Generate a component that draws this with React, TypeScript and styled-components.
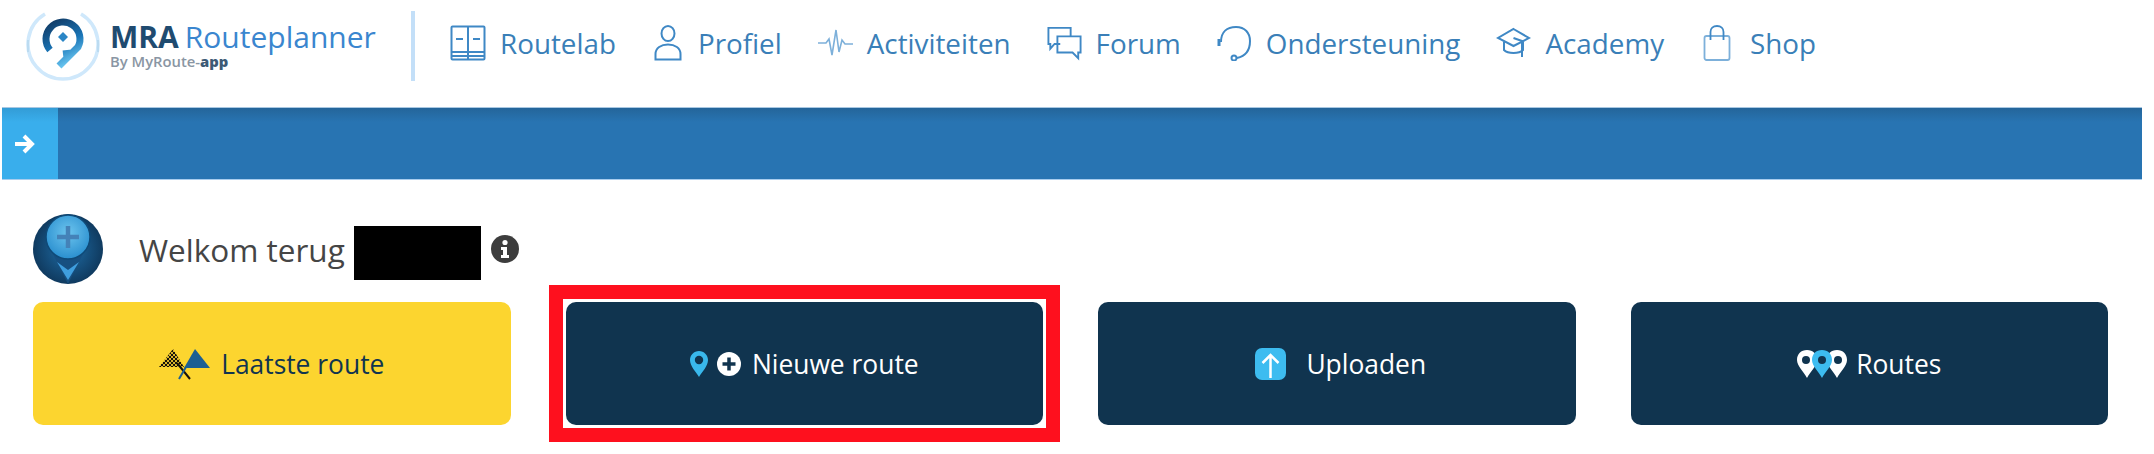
import styled, { createGlobalStyle } from "styled-components";

const GlobalStyle = createGlobalStyle`
  html, body {
    margin: 0;
    padding: 0;
    background: #fff;
    font-family: "Open Sans", "Noto Sans", sans-serif;
  }
`;

const Page = styled.div`
  width: 2154px;
  height: 454px;
  overflow: hidden;
  background: #fff;
`;

const Header = styled.header`
  height: 107px;
  display: flex;
  align-items: flex-start;
  padding-left: 26px;
  box-sizing: border-box;
`;

const Brand = styled.div`
  display: flex;
  align-items: flex-start;
  gap: 8px;
  width: 385px;
  padding-top: 10px;
`;

const BrandText = styled.div`
  display: flex;
  flex-direction: column;
  padding-top: 12px;
`;

const BrandTitle = styled.div`
  font-size: 30px;
  line-height: 30px;
  color: #3a86cf;
  white-space: nowrap;

  b {
    font-weight: 700;
    color: #1f4b70;
    margin-right: 6px;
  }
`;

const BrandSub = styled.div`
  font-size: 14.8px;
  line-height: 16px;
  margin-top: 1px;
  font-weight: 600;
  color: #8a96a3;
  white-space: nowrap;

  b {
    font-weight: 800;
    color: #3d5a75;
  }
`;

const Divider = styled.div`
  width: 4px;
  height: 70px;
  margin-top: 11px;
  background: #c3dff8;
`;

const Nav = styled.nav`
  display: flex;
  align-items: center;
  gap: 36px;
  height: 86px;
  margin-left: 35px;
`;

const NavItem = styled.a`
  display: flex;
  align-items: center;
  gap: 14px;
  font-size: 27.8px;
  color: #3a7fb8;
  white-space: nowrap;
`;

const Bar = styled.div`
  height: 73px;
  margin: 0 12px 0 2px;
  background: linear-gradient(#24659a, #2874b2 14px);
  border-top: 1px solid #a9c8e2;
  border-bottom: 1px solid #a9cdee;
  box-sizing: border-box;
`;

const Toggle = styled.button`
  width: 56px;
  height: 100%;
  border: none;
  padding: 0 12px 0 0;
  background: linear-gradient(#339cd6, #39aeec 14px);
  display: flex;
  align-items: center;
  justify-content: center;
`;

const Welcome = styled.div`
  display: flex;
  align-items: center;
  height: 70px;
  margin-top: 34px;
  padding-left: 33px;
`;

const WelcomeText = styled.span`
  font-size: 31.5px;
  color: #454545;
  margin-left: 36px;
  white-space: nowrap;
`;

const Redacted = styled.div`
  width: 127px;
  height: 54px;
  margin: 8px 10px 0 9px;
  background: #000;
`;

const Buttons = styled.div`
  display: grid;
  grid-template-columns: repeat(4, 1fr);
  gap: 55px;
  width: 2075px;
  margin: 18px 0 0 33px;
`;

const ActionButton = styled.button<{ $variant?: "yellow" | "navy"; $gap?: number; $shift?: number }>`
  flex: 1;
  height: 123px;
  border: none;
  border-radius: 10px;
  padding: 0 0 0 ${({ $shift }) => $shift ?? 0}px;
  display: flex;
  align-items: center;
  justify-content: center;
  gap: ${({ $gap }) => $gap ?? 11}px;
  font-family: inherit;
  font-size: 26.4px;
  background: ${({ $variant }) => ($variant === "yellow" ? "#fcd52f" : "#10344f")};
  color: ${({ $variant }) => ($variant === "yellow" ? "#10344f" : "#fff")};
`;

const MarkedFrame = styled.div`
  display: flex;
  margin: -17px;
  padding: 3px;
  border: 14px solid #fe101e;
  background: #fff;
`;

const IconPair = styled.span`
  display: flex;
  align-items: center;
  gap: 9px;
`;

const navBlue = "#3f88c5";

const BrandLogo = () => (
  <svg width="76" height="72" viewBox="0 0 76 72">
    <defs>
      <linearGradient id="pinGrad" x1="0.2" y1="0" x2="0.6" y2="1">
        <stop offset="0" stopColor="#123f6b" />
        <stop offset="0.55" stopColor="#1a76b8" />
        <stop offset="1" stopColor="#6cc8f2" />
      </linearGradient>
    </defs>
    <path d="M19 4 A35 35 0 1 0 55 4" fill="none" stroke="#cfe8fb" strokeWidth="3.5" />
    <path d="M2 30 V42 M72 30 V42" stroke="#b5d6ee" strokeWidth="1.5" />
    <path d="M24 40 A17 17 0 1 1 52 37 L33 56 M37 44 L46 43" fill="none" stroke="url(#pinGrad)" strokeWidth="7" strokeLinejoin="round" />
    <path d="M37 22 L42 27 L37 32 L32 27 Z" fill="#2a86c6" />
  </svg>
);

const BookIcon = () => (
  <svg width="36" height="36" viewBox="0 0 36 36" fill="none" stroke={navBlue} strokeWidth="2">
    <rect x="1.5" y="1.5" width="33" height="33" rx="1" />
    <path d="M18 1.5 V34.5 M1.5 27 H34.5 M1.5 31 H34.5" />
    <path d="M6 14 H13 M23 14 H30" />
  </svg>
);

const PersonIcon = () => (
  <svg width="32" height="36" viewBox="0 0 32 36" fill="none" stroke={navBlue} strokeWidth="2">
    <ellipse cx="16" cy="8.5" rx="6.5" ry="7.5" />
    <path d="M3.5 34.5 V29 C3.5 23 9 19.5 16 19.5 C23 19.5 28.5 23 28.5 29 V34.5 Z" />
  </svg>
);

const PulseIcon = () => (
  <svg width="35" height="30" viewBox="0 0 35 30" fill="none" stroke="#7db0da" strokeWidth="1.6">
    <path d="M0 15 H8 L11 11 L14 27 L18 2 L21 24 L24 12 L27 16 H35" />
  </svg>
);

const ForumIcon = () => (
  <svg width="35" height="36" viewBox="0 0 37 36" fill="none" stroke={navBlue} strokeWidth="2">
    <path d="M14 19 H8 L3.5 24 V19 H1.5 V2 H25 V11" />
    <path d="M11 11 H35.5 V28 H33 V34 L27 28 H11 Z" />
  </svg>
);

const HeadsetIcon = () => (
  <svg width="35" height="36" viewBox="0 0 35 36" fill="none" stroke={navBlue} strokeWidth="2">
    <path d="M4 17 C4 7 10 2 19 2 C28 2 33 8 33 16 C33 25 29 31 20 33" />
    <path d="M2 14 V21" strokeWidth="3" />
    <circle cx="17" cy="33" r="2.5" />
  </svg>
);

const CapIcon = () => (
  <svg width="35" height="32" viewBox="0 0 35 32" fill="none" stroke={navBlue} strokeWidth="2">
    <path d="M17.5 2 L33 11 L17.5 19 L2 11 Z" />
    <path d="M8 15 V23 C12 27 23 27 27 23 V15" />
    <path d="M17.5 11 L26 14 V30" />
  </svg>
);

const BagIcon = () => (
  <svg width="36" height="36" viewBox="-3 0 36 36" fill="none" stroke={navBlue} strokeWidth="1.8">
    <rect x="1.5" y="11" width="25" height="24" rx="2" stroke="#7db0da" />
    <path d="M7.5 15 V7 C7.5 3.5 10 1 14 1 C18 1 20.5 3.5 20.5 7 V15" />
  </svg>
);

const ArrowIcon = () => (
  <svg width="22" height="22" viewBox="0 0 22 22" fill="none" stroke="#fff" strokeWidth="4">
    <path d="M2 11 H18 M11 3 L19 11 L11 19" />
  </svg>
);

const Avatar = () => (
  <svg width="70" height="70" viewBox="0 0 70 70">
    <defs>
      <radialGradient id="avatarBg" cx="0.5" cy="0.5" r="0.55">
        <stop offset="0" stopColor="#1f6ea8" />
        <stop offset="1" stopColor="#0e3558" />
      </radialGradient>
      <radialGradient id="avatarPin" cx="0.5" cy="0.4" r="0.6">
        <stop offset="0" stopColor="#6cc4ee" />
        <stop offset="1" stopColor="#2a8fcf" />
      </radialGradient>
    </defs>
    <circle cx="35" cy="35" r="35" fill="url(#avatarBg)" />
    <path d="M14 28 L35 70 L56 28" fill="#174f80" />
    <circle cx="35" cy="23" r="22" fill="url(#avatarPin)" stroke="#0f4a78" strokeWidth="1.5" />
    <path d="M35 12 V34 M24 23 H46" stroke="#4482b8" strokeWidth="4.5" />
    <path d="M24 48 L35 66 L46 48 L35 56 Z" fill="#3f9ede" />
  </svg>
);

const InfoIcon = () => (
  <svg width="28" height="28" viewBox="0 0 28 28">
    <circle cx="14" cy="14" r="14" fill="#3d3d3d" />
    <circle cx="14" cy="7.5" r="2.6" fill="#fff" />
    <path d="M10 12 H16 V20 H18 V23 H10 V20 H12 V15 H10 Z" fill="#fff" />
  </svg>
);

const FlagsIcon = () => (
  <svg width="51" height="32" viewBox="0 0 51 32">
    <defs>
      <pattern id="checker" width="4" height="4" patternUnits="userSpaceOnUse">
        <rect width="4" height="4" fill="#17130a" />
        <rect width="2" height="2" fill="#d9b52a" />
        <rect x="2" y="2" width="2" height="2" fill="#d9b52a" />
      </pattern>
    </defs>
    <path d="M14 1 L25 19 L0 19 Z" fill="url(#checker)" />
    <path d="M36 1 L51 20 L25 20 Z" fill="#1c5f93" />
    <path d="M18 15 L31 31" stroke="#17130a" strokeWidth="2" fill="none" />
    <path d="M27 19 L20 31" stroke="#1c5f93" strokeWidth="2" fill="none" />
  </svg>
);

const PinIcon = () => (
  <svg width="18" height="26" viewBox="0 0 18 26">
    <path d="M9 0 C4 0 0 4 0 9 C0 15 6 21 9 26 C12 21 18 15 18 9 C18 4 14 0 9 0 Z" fill="#39b8ec" />
    <circle cx="9" cy="9" r="4.2" fill="#10344f" />
  </svg>
);

const PlusCircleIcon = () => (
  <svg width="24" height="24" viewBox="0 0 24 24">
    <circle cx="12" cy="12" r="12" fill="#fff" />
    <path d="M12 5.5 V18.5 M5.5 12 H18.5" stroke="#10344f" strokeWidth="3.5" />
  </svg>
);

const UploadIcon = () => (
  <svg width="31" height="32" viewBox="0 0 31 32">
    <rect width="31" height="32" rx="7" fill="#3dbcf0" />
    <path d="M15.5 30 V7 M7.5 15 L15.5 7 L23.5 15" fill="none" stroke="#fff" strokeWidth="2.5" />
  </svg>
);

const RoutesIcon = () => (
  <svg width="50" height="28" viewBox="0 0 50 28">
    <path d="M10 0 C4 0 0 4 0 10 C0 16 7 22 10 28 C13 22 20 16 20 10 C20 4 16 0 10 0 Z" fill="#fff" />
    <path d="M40 0 C34 0 30 4 30 10 C30 16 37 22 40 28 C43 22 50 16 50 10 C50 4 46 0 40 0 Z" fill="#fff" />
    <path d="M25 0 C19 0 15 4 15 10 C15 16 22 22 25 28 C28 22 35 16 35 10 C35 4 31 0 25 0 Z" fill="#3dbcf0" />
    <circle cx="9" cy="10" r="4" fill="#10344f" />
    <circle cx="25" cy="10" r="4" fill="#10344f" />
    <circle cx="41" cy="10" r="4" fill="#10344f" />
  </svg>
);

const navItems = [
  { label: "Routelab", icon: <BookIcon /> },
  { label: "Profiel", icon: <PersonIcon /> },
  { label: "Activiteiten", icon: <PulseIcon /> },
  { label: "Forum", icon: <ForumIcon /> },
  { label: "Ondersteuning", icon: <HeadsetIcon /> },
  { label: "Academy", icon: <CapIcon /> },
  { label: "Shop", icon: <BagIcon /> },
];

export default function App() {
  return (
    <Page>
      <GlobalStyle />
      <Header>
        <Brand>
          <BrandLogo />
          <BrandText>
            <BrandTitle>
              <b>MRA</b>Routeplanner
            </BrandTitle>
            <BrandSub>
              By MyRoute-<b>app</b>
            </BrandSub>
          </BrandText>
        </Brand>
        <Divider />
        <Nav>
          {navItems.map((item) => (
            <NavItem key={item.label}>
              {item.icon}
              {item.label}
            </NavItem>
          ))}
        </Nav>
      </Header>
      <Bar>
        <Toggle>
          <ArrowIcon />
        </Toggle>
      </Bar>
      <Welcome>
        <Avatar />
        <WelcomeText>Welkom terug</WelcomeText>
        <Redacted />
        <InfoIcon />
      </Welcome>
      <Buttons>
        <ActionButton $variant="yellow">
          <FlagsIcon />
          Laatste route
        </ActionButton>
        <MarkedFrame>
          <ActionButton>
            <IconPair>
              <PinIcon />
              <PlusCircleIcon />
            </IconPair>
            Nieuwe route
          </ActionButton>
        </MarkedFrame>
        <ActionButton $gap={20} $shift={8}>
          <UploadIcon />
          Uploaden
        </ActionButton>
        <ActionButton $gap={9}>
          <RoutesIcon />
          Routes
        </ActionButton>
      </Buttons>
    </Page>
  );
}
